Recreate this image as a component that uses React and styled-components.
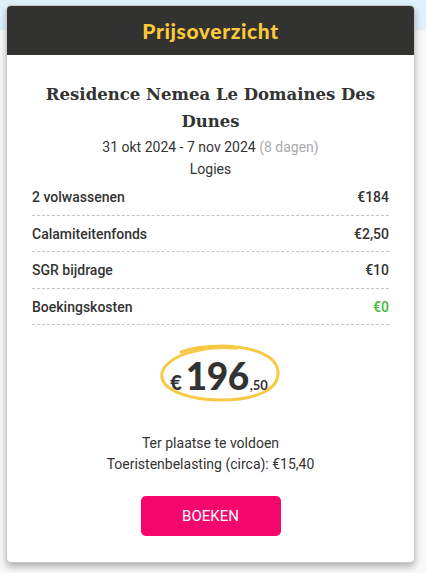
import React from 'react';
import styled, { createGlobalStyle } from 'styled-components';

const GlobalStyle = createGlobalStyle`
	* {
		box-sizing: border-box;
	}
	body {
		margin: 0;
		background: linear-gradient(to bottom, #def1fa 0, #def1fa 30px, #f8f8f8 30px, #f8f8f8 100%);
		font-family: Roboto, 'Liberation Sans', sans-serif;
		color: #333;
	}
`;

const rows = [
	{ label: '2 volwassenen', price: '€184' },
	{ label: 'Calamiteitenfonds', price: '€2,50' },
	{ label: 'SGR bijdrage', price: '€10' },
	{ label: 'Boekingskosten', price: '€0', free: true },
];

const App = () => {
	return (
		<Page>
			<GlobalStyle />
			<Card>
				<Header>Prijsoverzicht</Header>
				<Body>
					<Title>Residence Nemea Le Domaines Des Dunes</Title>
					<Dates>
						31 okt 2024 - 7 nov 2024 <Muted>(8 dagen)</Muted>
					</Dates>
					<Section>Logies</Section>
					<List>
						{rows.map((row) => (
							<Row key={row.label}>
								<Label>{row.label}</Label>
								<Price $free={row.free}>{row.price}</Price>
							</Row>
						))}
					</List>
					<TotalWrap>
						<Scribble viewBox="0 0 122 60" fill="none">
							<path
								d="M78 5 C 45 2, 8 12, 3 30 C 0 47, 30 57, 62 57 C 96 57, 120 47, 119 29 C 118 13, 96 4, 64 3 C 46 3, 32 5, 22 9"
								stroke="#f8c945"
								strokeWidth="3"
								strokeLinecap="round"
							/>
							<path
								d="M26 7 C 52 1, 92 1, 114 16"
								stroke="#f8c945"
								strokeWidth="1.3"
								strokeLinecap="round"
								opacity="0.8"
							/>
							<path
								d="M8 42 C 20 54, 52 59, 84 56"
								stroke="#f8c945"
								strokeWidth="1.3"
								strokeLinecap="round"
								opacity="0.8"
							/>
						</Scribble>
						<Total>
							<Euro>€</Euro>
							<Amount>196</Amount>
							<Cents>,50</Cents>
						</Total>
					</TotalWrap>
					<Note>
						Ter plaatse te voldoen
						<br />
						Toeristenbelasting (circa): €15,40
					</Note>
					<Button>BOEKEN</Button>
				</Body>
			</Card>
		</Page>
	);
};

export default App;

const Page = styled.div`
	padding: 5px 11px 10px 6px;
`;

const Card = styled.div`
	width: 409px;
	background: #fff;
	border: 1px solid #c8c8c8;
	border-radius: 5px;
	overflow: hidden;
	box-shadow: 0 4px 7px rgba(0, 0, 0, 0.28);
`;

const Header = styled.div`
	height: 49px;
	background-color: #323230;
	color: #fcc93a;
	font-family: Lato, 'Noto Sans', sans-serif;
	font-weight: 900;
	font-size: 21px;
	display: flex;
	align-items: center;
	justify-content: center;
	letter-spacing: 0.6px;
`;

const Body = styled.div`
	padding: 26px 25px 26px 25px;
	display: flex;
	flex-direction: column;
	align-items: center;
`;

const Title = styled.h2`
	margin: 0;
	font-family: 'DejaVu Serif', 'Liberation Serif', serif;
	font-weight: 700;
	font-size: 16.5px;
	line-height: 27px;
	text-align: center;
	color: #333;
`;

const Dates = styled.div`
	margin-top: 2px;
	font-size: 14px;
	line-height: 20px;
	color: #333;
`;

const Muted = styled.span`
	color: #aaa;
`;

const Section = styled.div`
	margin-top: 2px;
	font-size: 14px;
	line-height: 20px;
	color: #333;
`;

const List = styled.div`
	width: 100%;
	margin-top: 0;
`;

const Row = styled.div`
	display: flex;
	justify-content: space-between;
	align-items: center;
	height: 36.5px;
	border-bottom: 1px dashed #c4c4c4;
	padding-top: 1px;
	font-size: 14px;
	font-weight: 500;
`;

const Label = styled.span`
	color: #333;
`;

const Price = styled.span`
	color: ${(p) => (p.$free ? '#44bb3a' : '#333')};
`;

const TotalWrap = styled.div`
	position: relative;
	margin-top: 18px;
	margin-left: 19px;
	width: 122px;
	height: 60px;
	display: flex;
	align-items: center;
	justify-content: center;
`;

const Scribble = styled.svg`
	position: absolute;
	inset: 0;
	width: 122px;
	height: 60px;
`;

const Total = styled.div`
	position: relative;
	display: flex;
	align-items: baseline;
	font-family: Lato, 'Noto Sans', sans-serif;
	font-weight: 900;
	color: #333;
	margin-top: 4px;
	margin-left: -2px;
`;

const Euro = styled.span`
	font-size: 20px;
	margin-right: 4px;
`;

const Amount = styled.span`
	font-size: 37px;
	line-height: 1;
	letter-spacing: -0.5px;
`;

const Cents = styled.span`
	font-size: 13px;
	font-weight: 700;
	margin-left: 1px;
`;

const Note = styled.div`
	margin-top: 30px;
	font-size: 14px;
	line-height: 21px;
	text-align: center;
	color: #333;
`;

const Button = styled.button`
	margin-top: 21px;
	width: 140px;
	height: 40px;
	border: none;
	border-radius: 5px;
	background-color: #f5066c;
	color: #fff;
	font-family: Roboto, 'Liberation Sans', sans-serif;
	font-size: 15px;
	cursor: pointer;
`;
